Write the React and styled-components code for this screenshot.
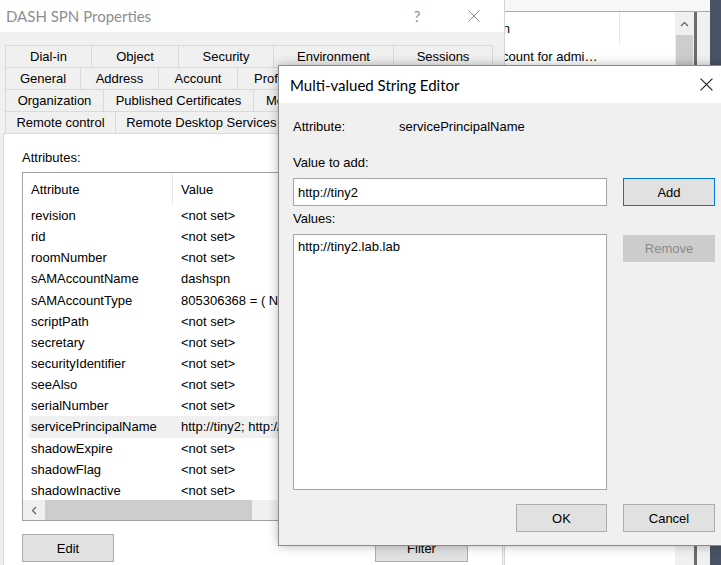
import React from "react";
import styled, { createGlobalStyle } from "styled-components";

const GlobalStyle = createGlobalStyle`
  html, body { margin: 0; padding: 0; width: 721px; height: 565px; overflow: hidden; }
  body {
    font-family: "Liberation Sans", Arial, sans-serif;
    font-size: 13px;
    color: #000;
    background: #4a5363;
  }
  * { box-sizing: border-box; }
`;

const Desktop = styled.div`
  position: relative;
  width: 721px;
  height: 565px;
  overflow: hidden;
  background: #4a5363;
`;

/* ---------- generic window shell (windows on a desktop) ---------- */
const WindowShell = styled.div`
  position: absolute;
  left: ${(p) => p.$x}px;
  top: ${(p) => p.$y}px;
  width: ${(p) => p.$w}px;
  height: ${(p) => p.$h}px;
  z-index: ${(p) => p.$z};
  display: flex;
  flex-direction: column;
  background: #f0f0f0;
`;

const DialogShell = styled(WindowShell)`
  border: 1px solid #8a8a8a;
  box-shadow: 0 0 10px rgba(0, 0, 0, 0.28);
`;

const TitleBar = styled.div`
  height: ${(p) => p.$h}px;
  flex-shrink: 0;
  background: #fff;
  display: flex;
  align-items: center;
  padding-left: ${(p) => p.$pad}px;
`;

const TitleText = styled.div`
  flex: 1;
  font-family: Lato, "Liberation Sans", sans-serif;
  font-size: 15px;
  color: ${(p) => (p.$inactive ? "#8e8e8e" : "#000")};
  white-space: nowrap;
`;

const CaptionButtons = styled.div`
  display: flex;
  gap: ${(p) => p.$gap}px;
  padding-right: ${(p) => p.$pad}px;
  height: 100%;
`;

const CaptionButton = styled.div`
  width: 46px;
  height: 100%;
  display: flex;
  align-items: center;
  justify-content: center;
  font-family: Lato, "Liberation Sans", sans-serif;
  font-size: 15px;
  color: ${(p) => (p.$inactive ? "#8e8e8e" : "#000")};
`;

const CloseIcon = ({ color, size = 12 }) => (
  <svg width={size} height={size} viewBox="0 0 12 12">
    <path d="M0.5 0.5 L11.5 11.5 M11.5 0.5 L0.5 11.5" stroke={color} strokeWidth="1" fill="none" />
  </svg>
);

/* ---------- background window (right) ---------- */
const BackTop = styled.div`
  height: 12px;
  background: #f7f7f7;
  border-bottom: 1px solid #a8a8a8;
  flex-shrink: 0;
`;

const BackBody = styled.div`
  flex: 1;
  display: flex;
  padding-right: 13px;
`;

const BackList = styled.div`
  flex: 1;
  background: #fff;
  display: flex;
  flex-direction: column;
`;

const BackGridRow = styled.div`
  display: grid;
  grid-template-columns: 9px 181px 1fr;
  height: ${(p) => p.$h}px;
`;

const BackCell = styled.div`
  padding-left: 6px;
  padding-right: 4px;
  display: flex;
  align-items: center;
  white-space: nowrap;
  overflow: hidden;
  border-right: ${(p) => (p.$sep ? "1px solid #e5e5e5" : "none")};
`;

const VScroll = styled.div`
  width: 19px;
  background: #f0f0f0;
  display: flex;
  flex-direction: column;
`;

const ScrollArrow = styled.div`
  height: 23px;
  display: flex;
  align-items: center;
  justify-content: center;
`;

const VThumb = styled.div`
  height: 260px;
  margin: 0 1px;
  background: #cdcdcd;
`;

const Frame = styled.div`
  width: 3px;
  background: #6c6c6c;
`;

/* ---------- properties window ---------- */
const PropWindow = styled(WindowShell)`
  border-right: 1px solid #d4d4d4;
`;

const TabStrip = styled.div`
  padding: 13px 0 0 5px;
  display: flex;
  flex-direction: column;
  flex-shrink: 0;
`;

const TabRow = styled.div`
  display: flex;
  height: 22px;
`;

const Tab = styled.div`
  width: ${(p) => p.$w}px;
  flex-shrink: 0;
  border-top: 1px solid #d9d9d9;
  border-left: 1px solid #d9d9d9;
  display: flex;
  align-items: center;
  justify-content: center;
  white-space: nowrap;
  overflow: hidden;
  background: #f0f0f0;
  &:last-child {
    border-right: 1px solid #d9d9d9;
  }
`;

const TabPage = styled.div`
  flex: 1;
  margin: 0 1px 0 3px;
  border: 1px solid #d9d9d9;
  border-bottom: none;
  background: #fff;
  padding: 16px 17px 0 18px;
  display: flex;
  flex-direction: column;
`;

const Label = styled.div`
  line-height: 16px;
  height: 16px;
  white-space: nowrap;
  margin-top: ${(p) => p.$mt || 0}px;
`;

const ListBox = styled.div`
  margin-top: 6px;
  height: 349px;
  width: 463px;
  border: 1px solid #a0a0a0;
  display: flex;
  flex-direction: column;
  background: #fff;
`;

const ListGrid = styled.div`
  display: grid;
  grid-template-columns: 144px 1fr;
  height: ${(p) => p.$h}px;
  flex-shrink: 0;
  background: ${(p) => (p.$selected ? "#f0f0f0" : "transparent")};
`;

const ListHeader = styled(ListGrid)`
  margin-left: 6px;
`;

const HeadCell = styled.div`
  display: flex;
  align-items: center;
  padding-left: ${(p) => p.$pad}px;
  border-right: ${(p) => (p.$sep ? "1px solid #e8e8e8" : "none")};
  white-space: nowrap;
`;

const ListRows = styled.div`
  flex: 1;
  overflow: hidden;
  padding-left: 6px;
`;

const Cell = styled.div`
  display: flex;
  align-items: center;
  padding-left: ${(p) => p.$pad}px;
  white-space: nowrap;
  overflow: hidden;
`;

const HScroll = styled.div`
  height: 20px;
  flex-shrink: 0;
  background: #f0f0f0;
  display: flex;
`;

const HArrow = styled.div`
  width: 22px;
  display: flex;
  align-items: center;
  justify-content: center;
`;

const HThumb = styled.div`
  width: 207px;
  background: #cdcdcd;
`;

const ButtonRow = styled.div`
  margin-top: 13px;
  display: flex;
  justify-content: space-between;
  padding-right: 17px;
`;

const Button = styled.div`
  width: ${(p) => p.$w}px;
  height: ${(p) => p.$h || 28}px;
  margin-top: ${(p) => p.$mt || 0}px;
  display: flex;
  align-items: center;
  justify-content: center;
  background: ${(p) => (p.$disabled ? "#cccccc" : "#e1e1e1")};
  border: 1px solid
    ${(p) => (p.$focus ? "#0078d7" : p.$disabled ? "#cccccc" : "#adadad")};
  color: ${(p) => (p.$disabled ? "#8b8b8b" : "#000")};
  white-space: nowrap;
  flex-shrink: 0;
`;

/* ---------- dialog ---------- */
const DialogBody = styled.div`
  flex: 1;
  padding: 16px 14px 0 14px;
  display: flex;
  flex-direction: column;
`;

const AttrLine = styled.div`
  display: flex;
  line-height: 16px;
  height: 16px;
`;

const AttrKey = styled.div`
  width: 106px;
`;

const FieldRow = styled.div`
  display: flex;
  align-items: flex-start;
  gap: 16px;
  margin-top: 7px;
`;

const TextInput = styled.div`
  width: 314px;
  height: 28px;
  border: 1px solid #a5a5a5;
  background: #fff;
  padding-left: 4px;
  display: flex;
  align-items: center;
`;

const ValuesList = styled.div`
  width: 314px;
  height: 256px;
  border: 1px solid #a5a5a5;
  background: #fff;
  padding: 4px 4px;
  line-height: 16px;
`;

const DialogFooter = styled.div`
  margin-top: 14px;
  display: flex;
  justify-content: flex-end;
  gap: 16px;
`;

const ChevronUp = () => (
  <svg width="9" height="6" viewBox="0 0 9 6">
    <path d="M1 5 L4.5 1.5 L8 5" stroke="#606060" strokeWidth="1.2" fill="none" />
  </svg>
);

const ChevronLeft = () => (
  <svg width="6" height="9" viewBox="0 0 6 9">
    <path d="M5 1 L1.5 4.5 L5 8" stroke="#606060" strokeWidth="1.2" fill="none" />
  </svg>
);

const tabRows = [
  [["Dial-in", 86], ["Object", 87], ["Security", 95], ["Environment", 120], ["Sessions", 100]],
  [["General", 75], ["Address", 78], ["Account", 79], ["Profile", 70], ["Telephones", 96], ["Delegation", 90]],
  [["Organization", 98], ["Published Certificates", 150], ["Member Of", 90], ["Password Replication", 150]],
  [["Remote control", 110], ["Remote Desktop Services Profile", 212], ["COM+", 66], ["Attribute Editor", 100]],
];

const attributes = [
  ["revision", "<not set>"],
  ["rid", "<not set>"],
  ["roomNumber", "<not set>"],
  ["sAMAccountName", "dashspn"],
  ["sAMAccountType", "805306368 = ( NORMAL_USER_ACCOUNT )"],
  ["scriptPath", "<not set>"],
  ["secretary", "<not set>"],
  ["securityIdentifier", "<not set>"],
  ["seeAlso", "<not set>"],
  ["serialNumber", "<not set>"],
  ["servicePrincipalName", "http://tiny2; http://tiny2.lab.lab", true],
  ["shadowExpire", "<not set>"],
  ["shadowFlag", "<not set>"],
  ["shadowInactive", "<not set>"],
];

export default function App() {
  return (
    <>
      <GlobalStyle />
      <Desktop>
        {/* background users list window */}
        <WindowShell $x={430} $y={0} $w={280} $h={565} $z={0}>
          <BackTop />
          <BackBody>
            <BackList>
              <BackGridRow $h={32}>
                <BackCell />
                <BackCell $sep>Description</BackCell>
                <BackCell />
              </BackGridRow>
              <BackGridRow $h={24}>
                <BackCell />
                <BackCell>Built-in account for admi…</BackCell>
                <BackCell />
              </BackGridRow>
            </BackList>
            <VScroll>
              <ScrollArrow>
                <ChevronUp />
              </ScrollArrow>
              <VThumb />
            </VScroll>
            <Frame />
          </BackBody>
        </WindowShell>

        {/* properties window */}
        <PropWindow $x={0} $y={0} $w={505} $h={565} $z={1}>
          <TitleBar $h={32} $pad={6}>
            <TitleText $inactive>DASH SPN Properties</TitleText>
            <CaptionButtons $gap={11} $pad={7}>
              <CaptionButton $inactive>?</CaptionButton>
              <CaptionButton $inactive>
                <CloseIcon color="#8e8e8e" />
              </CaptionButton>
            </CaptionButtons>
          </TitleBar>
          <TabStrip>
            {tabRows.map((row, i) => (
              <TabRow key={i}>
                {row.map(([name, w]) => (
                  <Tab key={name} $w={w}>
                    {name}
                  </Tab>
                ))}
              </TabRow>
            ))}
          </TabStrip>
          <TabPage>
            <Label>Attributes:</Label>
            <ListBox>
              <ListHeader $h={32}>
                <HeadCell $pad={2} $sep>
                  Attribute
                </HeadCell>
                <HeadCell $pad={8}>Value</HeadCell>
              </ListHeader>
              <ListRows>
                {attributes.map(([a, v, sel]) => (
                  <ListGrid key={a} $h={21.15} $selected={sel}>
                    <Cell $pad={2}>{a}</Cell>
                    <Cell $pad={8}>{v}</Cell>
                  </ListGrid>
                ))}
              </ListRows>
              <HScroll>
                <HArrow>
                  <ChevronLeft />
                </HArrow>
                <HThumb />
              </HScroll>
            </ListBox>
            <ButtonRow>
              <Button $w={92}>Edit</Button>
              <Button $w={93}>Filter</Button>
            </ButtonRow>
          </TabPage>
        </PropWindow>

        {/* Multi-valued String Editor dialog */}
        <DialogShell $x={278} $y={65} $w={452} $h={481} $z={2}>
          <TitleBar $h={37} $pad={11}>
            <TitleText>Multi-valued String Editor</TitleText>
            <CaptionButtons $gap={0} $pad={0}>
              <CaptionButton>
                <CloseIcon color="#1a1a1a" size={13} />
              </CaptionButton>
            </CaptionButtons>
          </TitleBar>
          <DialogBody>
            <AttrLine>
              <AttrKey>Attribute:</AttrKey>
              <div>servicePrincipalName</div>
            </AttrLine>
            <Label $mt={20}>Value to add:</Label>
            <FieldRow>
              <TextInput>http://tiny2</TextInput>
              <Button $w={92} $h={28} $focus>
                Add
              </Button>
            </FieldRow>
            <Label $mt={5}>Values:</Label>
            <FieldRow>
              <ValuesList>http://tiny2.lab.lab</ValuesList>
              <Button $w={92} $h={27} $disabled $mt={1}>
                Remove
              </Button>
            </FieldRow>
            <DialogFooter>
              <Button $w={91}>OK</Button>
              <Button $w={92}>Cancel</Button>
            </DialogFooter>
          </DialogBody>
        </DialogShell>
      </Desktop>
    </>
  );
}
